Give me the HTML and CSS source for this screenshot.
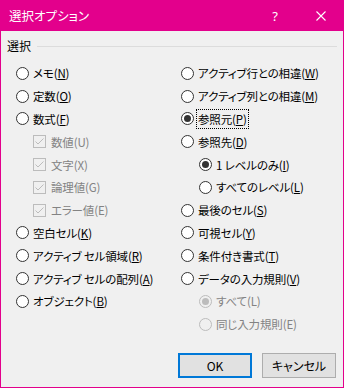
FILE: index.html
```html
<!DOCTYPE html>
<html lang="ja">
<head>
<meta charset="utf-8">
<title>選択オプション</title>
<link rel="stylesheet" href="styles.css">
</head>
<body>
<div class="dialog">
  <div class="titlebar">
    <span class="title">選択オプション</span>
    <span class="tbtn help">?</span>
    <span class="tbtn close">
      <svg width="10" height="10" viewBox="0 0 10 10"><path d="M0.5 0.5 L9.5 9.5 M9.5 0.5 L0.5 9.5" stroke="#fff" stroke-width="1.1" fill="none"/></svg>
    </span>
  </div>
  <div class="body">
    <div class="group-head"><span class="group-label">選択</span><span class="rule"></span></div>
    <div class="cols">
      <div class="col left">
        <div class="opt"><span class="radio"></span><span class="txt">メモ(<u>N</u>)</span></div>
        <div class="opt"><span class="radio"></span><span class="txt">定数(<u>O</u>)</span></div>
        <div class="opt"><span class="radio"></span><span class="txt">数式(<u>F</u>)</span></div>
        <div class="opt sub disabled"><span class="check"><svg width="13" height="13" viewBox="0 0 13 13"><rect x="0.5" y="0.5" width="12" height="12" fill="none" stroke="#bcbcbc"/><path d="M2.5 6.5 L5 9 L10.5 3.5" stroke="#bcbcbc" stroke-width="1" fill="none"/></svg></span><span class="txt">数値(U)</span></div>
        <div class="opt sub disabled"><span class="check"><svg width="13" height="13" viewBox="0 0 13 13"><rect x="0.5" y="0.5" width="12" height="12" fill="none" stroke="#bcbcbc"/><path d="M2.5 6.5 L5 9 L10.5 3.5" stroke="#bcbcbc" stroke-width="1" fill="none"/></svg></span><span class="txt">文字(X)</span></div>
        <div class="opt sub disabled"><span class="check"><svg width="13" height="13" viewBox="0 0 13 13"><rect x="0.5" y="0.5" width="12" height="12" fill="none" stroke="#bcbcbc"/><path d="M2.5 6.5 L5 9 L10.5 3.5" stroke="#bcbcbc" stroke-width="1" fill="none"/></svg></span><span class="txt">論理値(G)</span></div>
        <div class="opt sub disabled"><span class="check"><svg width="13" height="13" viewBox="0 0 13 13"><rect x="0.5" y="0.5" width="12" height="12" fill="none" stroke="#bcbcbc"/><path d="M2.5 6.5 L5 9 L10.5 3.5" stroke="#bcbcbc" stroke-width="1" fill="none"/></svg></span><span class="txt">エラー値(E)</span></div>
        <div class="opt"><span class="radio"></span><span class="txt">空白セル(<u>K</u>)</span></div>
        <div class="opt"><span class="radio"></span><span class="txt">アクティブ セル領域(<u>R</u>)</span></div>
        <div class="opt"><span class="radio"></span><span class="txt">アクティブ セルの配列(<u>A</u>)</span></div>
        <div class="opt"><span class="radio"></span><span class="txt">オブジェクト(<u>B</u>)</span></div>
      </div>
      <div class="col right">
        <div class="opt"><span class="radio"></span><span class="txt">アクティブ行との相違(<u>W</u>)</span></div>
        <div class="opt"><span class="radio"></span><span class="txt">アクティブ列との相違(<u>M</u>)</span></div>
        <div class="opt"><span class="radio on"></span><span class="txt focus">参照元(<u>P</u>)</span></div>
        <div class="opt"><span class="radio"></span><span class="txt">参照先(<u>D</u>)</span></div>
        <div class="opt sub2"><span class="radio on"></span><span class="txt">1 レベルのみ(<u>I</u>)</span></div>
        <div class="opt sub2"><span class="radio"></span><span class="txt">すべてのレベル(<u>L</u>)</span></div>
        <div class="opt"><span class="radio"></span><span class="txt">最後のセル(<u>S</u>)</span></div>
        <div class="opt"><span class="radio"></span><span class="txt">可視セル(<u>Y</u>)</span></div>
        <div class="opt"><span class="radio"></span><span class="txt">条件付き書式(<u>T</u>)</span></div>
        <div class="opt"><span class="radio"></span><span class="txt">データの入力規則(<u>V</u>)</span></div>
        <div class="opt sub2 disabled"><span class="radio on"></span><span class="txt">すべて(L)</span></div>
        <div class="opt sub2 disabled"><span class="radio"></span><span class="txt">同じ入力規則(E)</span></div>
      </div>
    </div>
    <div class="buttons">
      <button class="btn default">OK</button>
      <button class="btn">キャンセル</button>
    </div>
  </div>
</div>
</body>
</html>
```

FILE: styles.css
```css
html, body {
  margin: 0;
  padding: 0;
  background: #f0f0f0;
}
body {
  font-family: "Noto Sans CJK JP", "Noto Sans", sans-serif;
  font-size: 11.5px;
  letter-spacing: -0.15px;
  font-feature-settings: "palt";
  color: #000;
}
.dialog {
  width: 344px;
  height: 388px;
  box-sizing: border-box;
  border: 1px solid #e3008c;
  border-top: none;
  background: #f0f0f0;
  display: flex;
  flex-direction: column;
}
.titlebar {
  height: 31px;
  margin: 0 -1px;
  background: #e3008c;
  color: #fff;
  display: flex;
  align-items: center;
  flex: none;
  letter-spacing: 0;
}
.title {
  flex: 1;
  padding-left: 9px;
  font-size: 12.5px;
  line-height: 31px;
}
.tbtn {
  width: 46px;
  height: 31px;
  display: flex;
  align-items: center;
  justify-content: center;
}
.help {
  font-family: "Noto Sans", sans-serif;
  font-size: 13px;
}
.body {
  flex: 1;
  display: flex;
  flex-direction: column;
  padding: 7px 6px 9px 6px;
}
.group-head {
  display: flex;
  align-items: center;
  gap: 6px;
  height: 16px;
}
.group-label {
  line-height: 16px;
  font-size: 12px;
  letter-spacing: 0;
}
.rule {
  flex: 1;
  height: 1px;
  background: #dcdcdc;
}
.cols {
  display: grid;
  grid-template-columns: 165px 1fr;
  padding-left: 9px;
  margin-top: 8px;
}
.opt {
  height: 22.8px;
  display: flex;
  align-items: center;
  white-space: nowrap;
}
.radio {
  width: 13px;
  height: 13px;
  box-sizing: border-box;
  border: 1px solid #333;
  border-radius: 50%;
  background: #fff;
  flex: none;
  margin-right: 4px;
  display: flex;
  align-items: center;
  justify-content: center;
}
.radio.on::after {
  content: "";
  width: 7px;
  height: 7px;
  border-radius: 50%;
  background: #333;
}
.check {
  width: 13px;
  height: 13px;
  flex: none;
  margin-right: 5px;
  display: flex;
}
.sub {
  padding-left: 17px;
}
.sub2 {
  padding-left: 18px;
}
.disabled .txt {
  color: #838383;
}
.disabled .radio {
  border-color: #bcbcbc;
  background: #f0f0f0;
}
.disabled .radio.on::after {
  background: #bcbcbc;
}
.txt {
  line-height: 16px;
}
.txt u {
  text-underline-offset: 1px;
}
.focus {
  outline: 1px dotted #000;
  outline-offset: 1px;
}
.buttons {
  margin-top: auto;
  display: flex;
  justify-content: flex-end;
  gap: 10px;
  padding-right: 1px;
}
.btn {
  width: 74px;
  height: 25px;
  box-sizing: border-box;
  background: #e1e1e1;
  border: 1px solid #adadad;
  font-family: "Noto Sans CJK JP", "Noto Sans", sans-serif;
  font-feature-settings: "palt";
  font-size: 12px;
  color: #000;
  padding: 0;
}
.btn.default {
  border: 2px solid #0078d7;
}
```
